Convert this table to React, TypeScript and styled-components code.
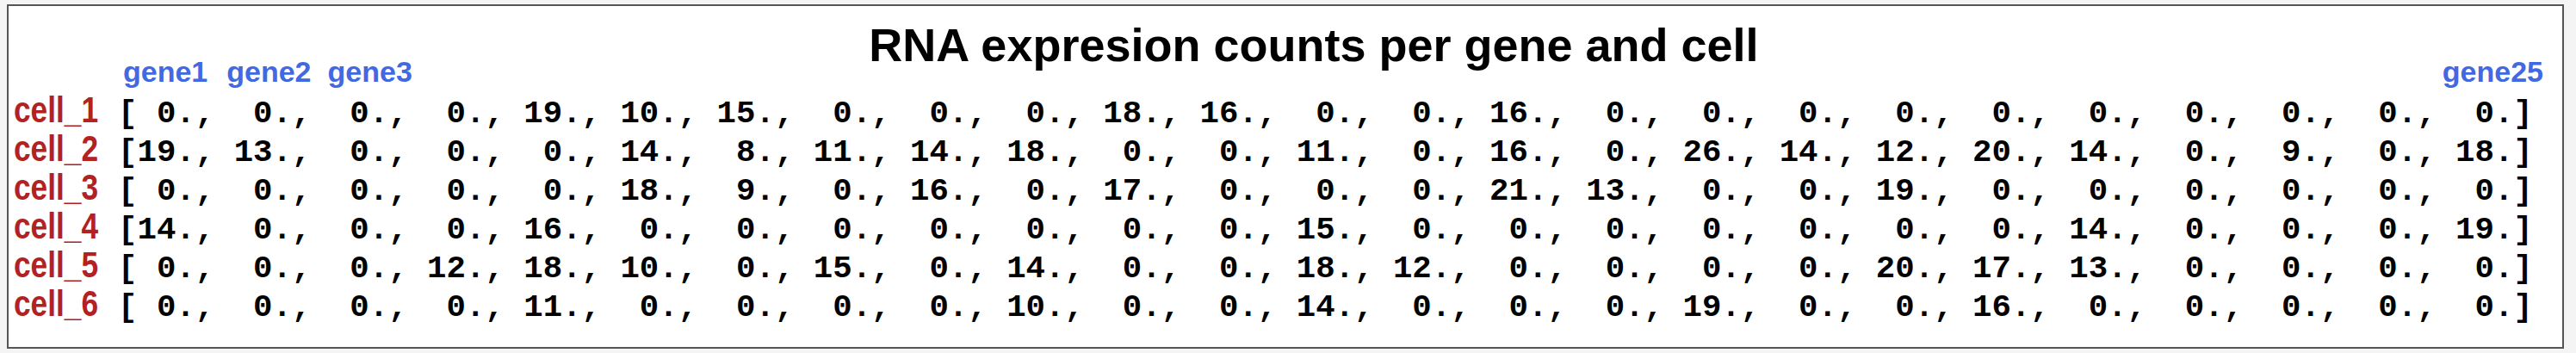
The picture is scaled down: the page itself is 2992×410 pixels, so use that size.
import styled, { createGlobalStyle } from "styled-components";

const GlobalStyle = createGlobalStyle`
  html, body {
    margin: 0;
    padding: 0;
    background: #f4f4f4;
  }
`;

const Page = styled.div`
  padding: 5px 0 0 8px;
`;

const Figure = styled.div`
  box-sizing: border-box;
  width: 2970px;
  height: 400px;
  border: 2px solid #555555;
  background: #ffffff;
  padding: 22px 0 0 6px;
  display: flex;
  flex-direction: column;
`;

const Title = styled.h1`
  margin: 0;
  padding-left: 60px;
  text-align: center;
  font-family: "Liberation Sans", Arial, sans-serif;
  font-weight: 700;
  font-size: 54px;
  line-height: 46px;
  color: #000000;
`;

const GeneRow = styled.div`
  display: flex;
  align-items: baseline;
  margin-top: -8px;
  height: 33px;
`;

const GeneLabel = styled.span<{ $gap: number; $auto?: boolean }>`
  margin-left: ${(p) => (p.$auto ? "auto" : `${p.$gap}px`)};
  margin-right: ${(p) => (p.$auto ? `${p.$gap}px` : "0")};
  font-family: "Liberation Sans", Arial, sans-serif;
  font-weight: 700;
  font-size: 34px;
  line-height: 33px;
  color: #4169e1;
`;

const Matrix = styled.div`
  margin-top: 10px;
  display: flex;
  flex-direction: column;
`;

const Row = styled.div`
  display: flex;
  align-items: baseline;
  height: 45px;
  line-height: 45px;
`;

// narrow bold label, like Arial Narrow
const CellLabel = styled.span`
  display: inline-block;
  width: 121px;
  flex: none;
  font-family: "Liberation Sans", Arial, sans-serif;
  font-weight: 700;
  font-size: 43px;
  line-height: 35px;
  color: #b22222;
  transform: scaleX(0.82);
  transform-origin: left center;
`;

const Values = styled.span`
  font-family: "Liberation Mono", "DejaVu Sans Mono", monospace;
  font-weight: 700;
  font-size: 37.4px;
  white-space: pre;
  color: #000000;
`;

const counts: number[][] = [
  [0, 0, 0, 0, 19, 10, 15, 0, 0, 0, 18, 16, 0, 0, 16, 0, 0, 0, 0, 0, 0, 0, 0, 0, 0],
  [19, 13, 0, 0, 0, 14, 8, 11, 14, 18, 0, 0, 11, 0, 16, 0, 26, 14, 12, 20, 14, 0, 9, 0, 18],
  [0, 0, 0, 0, 0, 18, 9, 0, 16, 0, 17, 0, 0, 0, 21, 13, 0, 0, 19, 0, 0, 0, 0, 0, 0],
  [14, 0, 0, 0, 16, 0, 0, 0, 0, 0, 0, 0, 15, 0, 0, 0, 0, 0, 0, 0, 14, 0, 0, 0, 19],
  [0, 0, 0, 12, 18, 10, 0, 15, 0, 14, 0, 0, 18, 12, 0, 0, 0, 0, 20, 17, 13, 0, 0, 0, 0],
  [0, 0, 0, 0, 11, 0, 0, 0, 0, 10, 0, 0, 14, 0, 0, 0, 19, 0, 0, 16, 0, 0, 0, 0, 0],
];

// numpy-style float row: "[ 0., 19., ...]"
const formatRow = (row: number[]) =>
  "[" + row.map((v) => `${v}.`.padStart(3, " ")).join(", ") + "]";

export default function App() {
  return (
    <>
      <GlobalStyle />
      <Page>
        <Figure>
          <Title>RNA expresion counts per gene and cell</Title>
          <GeneRow>
            <GeneLabel $gap={127}>gene1</GeneLabel>
            <GeneLabel $gap={22}>gene2</GeneLabel>
            <GeneLabel $gap={19}>gene3</GeneLabel>
            <GeneLabel $gap={22} $auto>
              gene25
            </GeneLabel>
          </GeneRow>
          <Matrix>
            {counts.map((row, i) => (
              <Row key={i}>
                <CellLabel>cell_{i + 1}</CellLabel>
                <Values>{formatRow(row)}</Values>
              </Row>
            ))}
          </Matrix>
        </Figure>
      </Page>
    </>
  );
}
